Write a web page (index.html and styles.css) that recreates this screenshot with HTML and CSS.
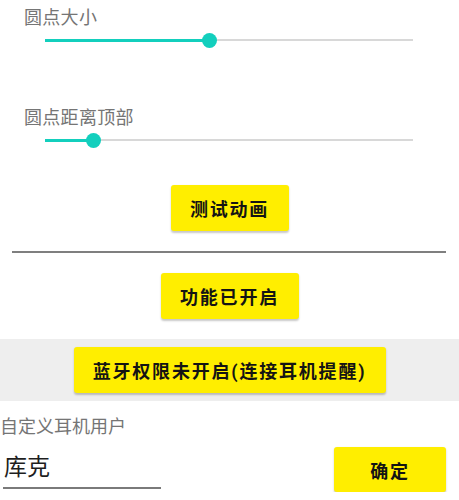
FILE: index.html
```html
<!DOCTYPE html>
<html lang="zh-CN">
<head>
<meta charset="utf-8">
<title>设置</title>
<link rel="stylesheet" href="styles.css">
</head>
<body>
<div class="page">
  <section class="setting first">
    <div class="label">圆点大小</div>
    <div class="slider">
      <div class="fill" style="width:44.8%"></div>
      <div class="thumb"></div>
      <div class="rest"></div>
    </div>
  </section>
  <section class="setting second">
    <div class="label">圆点距离顶部</div>
    <div class="slider">
      <div class="fill" style="width:13.3%"></div>
      <div class="thumb"></div>
      <div class="rest"></div>
    </div>
  </section>
  <div class="center-row test-row">
    <button class="btn btn-test">测试动画</button>
  </div>
  <hr class="divider">
  <div class="center-row feature-row">
    <button class="btn btn-feature">功能已开启</button>
  </div>
  <div class="band">
    <button class="btn btn-bt">蓝牙权限未开启(连接耳机提醒)</button>
  </div>
  <div class="custom-label">自定义耳机用户</div>
  <div class="input-row">
    <div class="input">库克</div>
    <button class="btn btn-ok">确定</button>
  </div>
</div>
</body>
</html>
```
FILE: styles.css
```css
html, body {
  margin: 0;
  padding: 0;
  background: #ffffff;
}
body {
  font-family: Roboto, "Noto Sans CJK SC", sans-serif;
  width: 459px;
  overflow: hidden;
}
.page {
  display: flex;
  flex-direction: column;
}
.setting {
  display: flex;
  flex-direction: column;
}
.setting.first {
  margin-top: 6px;
}
.setting.second {
  margin-top: 56px;
}
.label {
  padding-left: 24px;
  font-size: 18px;
  letter-spacing: 0.3px;
  line-height: 24px;
  color: #757575;
}
.slider {
  display: flex;
  align-items: center;
  height: 20px;
  margin: 0 46px 0 45px;
}
.fill {
  height: 3px;
  background: #13cfbd;
  flex: none;
}
.thumb {
  flex: none;
  width: 15px;
  height: 15px;
  border-radius: 50%;
  background: #13cfbd;
  margin: 0 -7.5px;
  position: relative;
  z-index: 1;
}
.rest {
  flex: 1;
  height: 2px;
  background: #d8d8d8;
}
.center-row {
  display: flex;
  justify-content: center;
}
.test-row {
  margin-top: 35px;
}
.btn {
  border: none;
  background: #ffee00;
  border-radius: 3px;
  box-shadow: 0 1.5px 2px rgba(0, 0, 0, 0.22);
  font-family: Roboto, "Noto Sans CJK SC", sans-serif;
  font-size: 18px;
  font-weight: 700;
  letter-spacing: 1.8px;
  color: #141414;
  height: 46px;
  padding: 0;
  display: flex;
  align-items: center;
  justify-content: center;
}
.btn-test {
  width: 118px;
}
.divider {
  margin: 20px 13px 0 12px;
  border: none;
  height: 2px;
  background: #7f7f7f;
}
.feature-row {
  margin-top: 20px;
}
.btn-feature {
  width: 138px;
}
.band {
  margin-top: 20px;
  background: #eeeeee;
  padding: 8px 0;
  display: flex;
  justify-content: center;
}
.btn-bt {
  width: 312px;
}
.custom-label {
  margin-top: 14px;
  font-size: 18px;
  line-height: 24px;
  color: #757575;
}
.input-row {
  margin-top: 8px;
  display: flex;
  justify-content: space-between;
  align-items: flex-start;
  padding: 0 13px 0 3px;
}
.input {
  width: 157px;
  margin-top: 5px;
  padding-left: 1px;
  font-size: 23px;
  line-height: 32px;
  color: #1e1e1e;
  padding-bottom: 3px;
  border-bottom: 2px solid #7a7a7a;
}
.btn-ok {
  width: 112px;
  height: 45px;
}
```
